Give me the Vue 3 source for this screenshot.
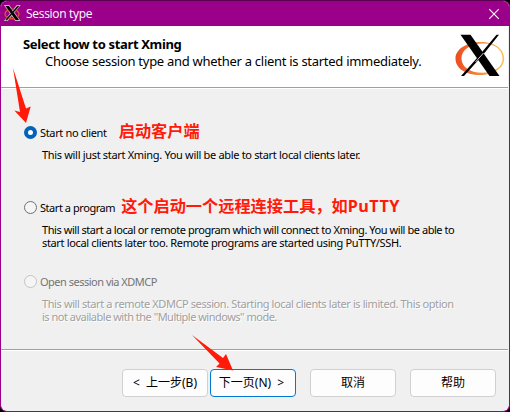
<script setup>
const options = [
  {
    id: 'none',
    label: 'Start no client',
    note: '启动客户端',
    lines: ['This will just start Xming. You will be able to start local clients later.'],
  },
  {
    id: 'program',
    label: 'Start a program',
    note: '这个启动一个远程连接工具，如',
    noteLatin: 'PuTTY',
    lines: [
      'This will start a local or remote program which will connect to Xming. You will be able to',
      'start local clients later too. Remote programs are started using PuTTY/SSH.',
    ],
  },
  {
    id: 'xdmcp',
    label: 'Open session via XDMCP',
    disabled: true,
    lines: [
      'This will start a remote XDMCP session. Starting local clients later is limited. This option',
      'is not available with the "Multiple windows" mode.',
    ],
  },
]
const selected = 'none'
</script>

<template>
  <div class="desktop">
    <div class="window">
      <header class="titlebar">
        <svg class="app-icon" viewBox="0 0 18 18" width="18" height="18">
          <path d="M2 1.500H6L16.500 16.500H12.500Z M14 1.500H16.500L4.500 16.500H2Z" fill="none" stroke="#c9b3bd" stroke-width="1.200" />
          <ellipse cx="9" cy="10" rx="7" ry="4.800" fill="none" stroke="#d9532f" stroke-width="1.400" />
          <path d="M2.500 2H5.800L16 16H12.800Z" fill="#000" />
          <path d="M15.500 2L3 16" stroke="#111" stroke-width="1.200" />
        </svg>
        <span class="title">Session type</span>
        <svg class="close" viewBox="0 0 12 12" width="12" height="12">
          <path d="M1.2 1.2L10.8 10.8M10.8 1.2L1.2 10.8" stroke="#fff" stroke-width="1.1" fill="none" />
        </svg>
      </header>

      <section class="banner">
        <div class="headings">
          <h1>Select how to start Xming</h1>
          <p>Choose session type and whether a client is started immediately.</p>
        </div>
        <svg class="logo" viewBox="0 0 50 44" width="50" height="44">
          <defs>
            <linearGradient id="ring" x1="0" x2="1" y1="0" y2="0">
              <stop offset="0" stop-color="#ec4a20" />
              <stop offset="0.5" stop-color="#f58a3c" />
              <stop offset="1" stop-color="#f8c45c" />
            </linearGradient>
          </defs>
          <path
            fill="url(#ring)"
            fill-rule="evenodd"
            d="M26 9C39 9 49.200 15.500 49.200 25.500C49.200 35.500 38 42 25 42C10 42 .5 35 .5 25.500C.5 16 12 9 26 9Z M28 10.500C16 10.500 6.500 16.500 6.500 25.500C6.500 34 15 39.800 27 39.800C39 39.800 47.600 34 47.600 25.500C47.600 17 40 10.500 28 10.500Z"
          />
          <path d="M5.500 1.800H15.500L44.500 43H34.500Z" fill="#000" />
          <path d="M41.500 1.800H44L27.500 22.500L9 43H6L22 25Z" fill="#000" />
          <path d="M28.500 20L20.500 29" stroke="#fff" stroke-width="0.8" />
        </svg>
      </section>

      <main class="body">
        <div v-for="o in options" :key="o.id" class="option" :class="[o.id, { disabled: o.disabled }]">
          <div class="choice">
            <span class="radio" :class="{ on: o.id === selected }"></span>
            <span class="label">{{ o.label }}</span>
            <span v-if="o.note" class="note">{{ o.note }}<b v-if="o.noteLatin">{{ o.noteLatin }}</b></span>
          </div>
          <div class="desc">
            <div v-for="(l, i) in o.lines" :key="i" :class="'line' + i">{{ l }}</div>
          </div>
        </div>
      </main>

      <footer class="actions">
        <button class="back">&lt; 上一步(B)</button>
        <button class="next">下一页(N) &nbsp;&gt;</button>
        <button class="cancel">取消</button>
        <button class="help">帮助</button>
      </footer>
    </div>

    <svg class="arrow first" viewBox="0 0 20 58" width="20" height="58">
      <path d="M1 1L14 41.500L18.700 39.500L14 56L2.300 43.500L8 45Z" fill="#ff1a0a" />
    </svg>
    <svg class="arrow second" viewBox="0 0 44 38" width="44" height="38">
      <path d="M1 1L32 24L35 20L42 36.500L25 33L28.500 29.500Z" fill="#ff1a0a" />
    </svg>
  </div>
</template>

<style>
body { margin: 0; background: #000; }
</style>

<style scoped>
.desktop { position: relative; width: 510px; height: 412px; background: #000; overflow: hidden; }
.window {
  box-sizing: border-box; width: 510px; height: 412px; display: flex; flex-direction: column;
  border: 1px solid #9b008b; border-top-color: #5c0052; border-radius: 7px; overflow: hidden; background: #f0f0f0;
  font-family: "Noto Sans", "Noto Sans CJK SC", sans-serif; color: #000;
}
.titlebar { flex: none; height: 25px; display: flex; align-items: center; background: #9b008b; color: #fff; padding: 0 9px 0 2px; }
.app-icon { flex: none; margin-top: -1px; }
.title { margin-left: 5px; font-size: 12px; line-height: 16px; letter-spacing: -0.3px; white-space: nowrap; flex: 1; margin-top: 1px; font-family: "Open Sans", sans-serif; }
.close { flex: none; }
.banner { flex: none; height: 61px; background: #fff; display: flex; justify-content: space-between; border-bottom: 1px solid #a0a0a0; box-shadow: 0 1px 0 #fff; margin-right: 1px; }
.headings { padding: 9px 0 0 22px; white-space: nowrap; }
h1 { margin: 0; font-size: 13px; line-height: 18px; font-weight: 700; letter-spacing: -0.34px; }
.headings p { margin: 0 0 0 22px; font-size: 13px; line-height: 17px; letter-spacing: -0.28px; }
.logo { margin: 7px 3px 0 0; flex: none; }
.body { flex: 1; padding-top: 34px; font-size: 11px; }
.option { height: 75px; padding-left: 23px; white-space: nowrap; }
.program { height: 74px; }
.choice { display: flex; align-items: center; height: 21px; }
.radio { box-sizing: border-box; width: 13px; height: 13px; border-radius: 50%; border: 1px solid #707070; background: #f5f5f5; }
.radio.on { border: 4px solid #0462b8; background: #fff; }
.label { margin-left: 3px; line-height: 14px; letter-spacing: -0.34px; }
.program .label { letter-spacing: -0.45px; }
.xdmcp .label { letter-spacing: -0.5px; }
.note { margin: -4px 0 0 12px; color: #ff1a0a; font: 700 16.2px/21px "Noto Sans CJK SC", sans-serif; }
.program .note { margin-left: 6px; }
.note b { font-family: "Noto Sans", sans-serif; font-weight: 700; letter-spacing: 0.5px; }
.desc { padding: 5px 0 0 18px; line-height: 13px; }
.none .line0 { letter-spacing: -0.32px; }
.program .line0 { letter-spacing: -0.44px; }
.program .line1 { letter-spacing: -0.35px; }
.xdmcp .line0 { letter-spacing: -0.4px; }
.xdmcp .line1 { letter-spacing: -0.5px; }
.disabled .label { color: #747474; }
.disabled .radio { border-color: #c3c3c3; }
.disabled .desc { color: #a0a0a0; text-shadow: 1px 1px 0 #fff; }
.actions { flex: none; border-top: 1px solid #a0a0a0; box-shadow: inset 0 1px 0 #fff; margin-right: 1px; display: flex; padding: 19px 0 0 121px; box-sizing: border-box; height: 62px; }
button { box-sizing: border-box; width: 86px; height: 28px; padding: 0; border: 1px solid #d0d0d0; border-radius: 4px; background: #fdfdfd; color: #000; font: 12px/24px "Noto Sans", "Noto Sans CJK SC", sans-serif; white-space: nowrap; }
.back { word-spacing: 3px; }
.next { margin-left: 2px; border-color: #0078d4; padding-right: 3px; }
.cancel, .help { margin-left: 14px; }
.arrow { position: absolute; }
.first { left: 12px; top: 67px; }
.second { left: 191px; top: 334px; }
</style>
